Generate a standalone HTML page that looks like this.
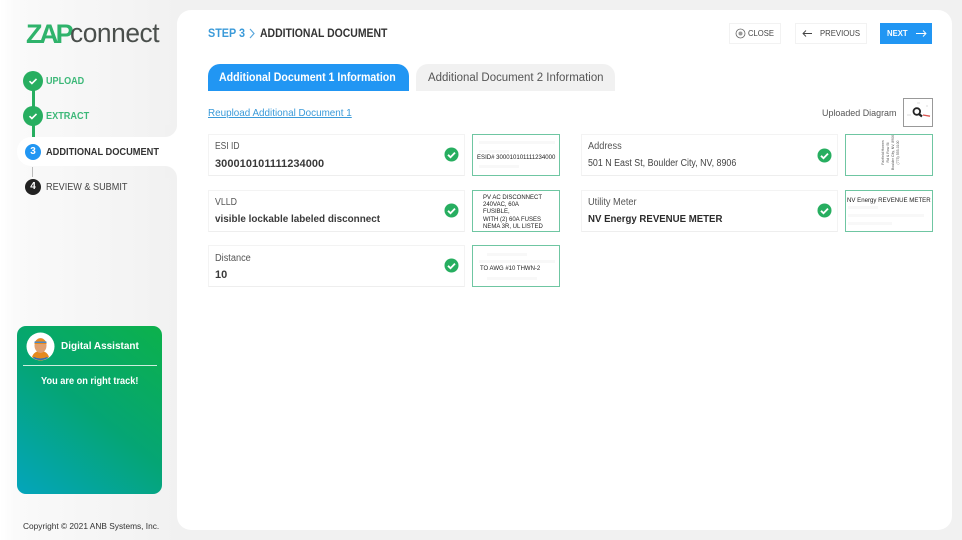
<!DOCTYPE html>
<html><head><meta charset="utf-8"><style>
*{box-sizing:border-box;margin:0;padding:0}
html,body{width:962px;height:540px;overflow:hidden}
body{position:relative;background:#f1f1f1;font-family:"Liberation Sans",sans-serif;color:#333}
.a{position:absolute;white-space:nowrap;transform-origin:0 0}
.card{position:absolute;background:#fff;border:1px solid #f3f3f3;border-bottom-color:#eee}
.lbl{position:absolute;font-size:10px;color:#555;white-space:nowrap;transform-origin:0 0}
.val{position:absolute;font-size:11px;color:#3a3a3a;font-weight:bold;white-space:nowrap;transform-origin:0 0}
.thumb{position:absolute;width:88px;height:42px;background:#fff;border:1px solid #6fc6a2;overflow:hidden}
.thumb span{position:absolute;white-space:nowrap;font-size:6px;color:#222;line-height:8px}
.ghost{position:absolute;height:3px;background:#f8f8f8}
.ck{position:absolute;width:15px;height:15px}
</style></head><body>
<div class="a" style="left:0;top:0;width:177px;height:540px;background:linear-gradient(90deg,#fff 0,#fafafa 15px,#f1f1f1 100%)"></div>
<div class="a" style="left:177px;top:10px;width:775px;height:520px;background:#fff;border-radius:14px"></div>
<div class="a" style="left:17px;top:137px;width:165px;height:29px;background:#fff;border-radius:14px 0 0 14px"></div>
<div class="a" style="left:165px;top:125px;width:12px;height:12px;background:#fff"></div>
<div class="a" style="left:165px;top:125px;width:12px;height:12px;background:#f1f1f1;border-radius:0 0 12px 0"></div>
<div class="a" style="left:165px;top:166px;width:12px;height:12px;background:#fff"></div>
<div class="a" style="left:165px;top:166px;width:12px;height:12px;background:#f1f1f1;border-radius:0 12px 0 0"></div>

<div class="a" style="left:26px;top:19px;font-size:27px;line-height:30px;font-weight:bold;color:#2fb36b;letter-spacing:-3.200px">ZAP</div>
<div class="a" style="left:70px;top:18px;font-size:27px;line-height:30px;color:#4a4f4c;letter-spacing:-.45px;transform:scaleX(.975)">connect</div>

<div class="a" style="left:32px;top:90px;width:3px;height:47px;background:#27ae60"></div>
<div class="a" style="left:32px;top:167px;width:1px;height:10px;background:#bbb"></div>
<svg class="a" style="left:23px;top:71px" width="20" height="20"><circle cx="10" cy="10" r="10" fill="#27ae60"/><path d="M6.500 10.200l2.400 2.300 4.600-4.600" fill="none" stroke="#fff" stroke-width="1.600"/></svg>
<svg class="a" style="left:23px;top:106px" width="20" height="20"><circle cx="10" cy="10" r="10" fill="#27ae60"/><path d="M6.500 10.200l2.400 2.300 4.600-4.600" fill="none" stroke="#fff" stroke-width="1.600"/></svg>
<div class="a" style="left:25px;top:144px;width:16px;height:16px;border-radius:50%;background:#2196f3;color:#fff;font-size:10px;font-weight:bold;text-align:center;line-height:16px">3</div>
<div class="a" style="left:25px;top:179px;width:16px;height:16px;border-radius:50%;background:#222;color:#fff;font-size:10px;font-weight:bold;text-align:center;line-height:16px">4</div>
<div class="a" style="left:46px;top:76px;font-size:10px;line-height:12px;font-weight:bold;color:#3cb878;transform:scaleX(.905)">UPLOAD</div>
<div class="a" style="left:46px;top:111px;font-size:10px;line-height:12px;font-weight:bold;color:#3cb878;transform:scaleX(.915)">EXTRACT</div>
<div class="a" style="left:46px;top:147px;font-size:10px;line-height:12px;font-weight:bold;color:#333;transform:scaleX(.926)">ADDITIONAL DOCUMENT</div>
<div class="a" style="left:46px;top:182px;font-size:10px;line-height:12px;color:#444;transform:scaleX(.91)">REVIEW &amp; SUBMIT</div>

<div class="a" style="left:17px;top:326px;width:145px;height:168px;border-radius:9px;background:linear-gradient(218deg,#0cb14b 0%,#05a574 50%,#04a5bc 100%)"></div>
<svg class="a" style="left:26px;top:332px" width="29" height="29" viewBox="0 0 29 29"><circle cx="14.500" cy="14.500" r="14" fill="#fff"/><path d="M6 25q2-6 8.500-6t8.500 6q-4 3.500-8.500 3.500T6 25z" fill="#e58a1f"/><path d="M8 25q6.500 3 13 0l1 1q-7.500 4-15 0z" fill="#2d72b8"/><ellipse cx="14.500" cy="13.500" rx="6" ry="7.500" fill="#e0a070"/><path d="M8.500 10q6-7 12 0v2h-12z" fill="#e88a1e"/><path d="M8.500 9.500h12v1.500h-12z" fill="#4a86c5"/></svg>
<div class="a" style="left:61px;top:340px;font-size:10.500px;line-height:13px;font-weight:bold;color:#fff;transform:scaleX(.95)">Digital Assistant</div>
<div class="a" style="left:23px;top:365px;width:134px;height:1px;background:#cdeedd"></div>
<div class="a" style="left:41px;top:375px;font-size:10px;line-height:13px;font-weight:bold;color:#fff;transform:scaleX(.92)">You are on right track!</div>
<div class="a" style="left:23px;top:521px;font-size:8.500px;line-height:11px;color:#333;transform:scaleX(.98)">Copyright © 2021 ANB Systems, Inc.</div>

<div class="a" style="left:208px;top:26px;font-size:12px;line-height:14px;font-weight:bold;color:#3a9ad9;transform:scaleX(.9)">STEP 3</div>
<svg class="a" style="left:248px;top:28px" width="8" height="11"><path d="M2 1l4 4.500L2 10" fill="none" stroke="#5aa7dc" stroke-width="1.200"/></svg>
<div class="a" style="left:260px;top:26px;font-size:12px;line-height:14px;font-weight:bold;color:#333;transform:scaleX(.87)">ADDITIONAL DOCUMENT</div>

<div class="a" style="left:729px;top:23px;width:52px;height:21px;background:#fff;border:1px solid #f2f2f2"></div>
<svg class="a" style="left:735px;top:28px" width="11" height="11"><circle cx="5.500" cy="5.500" r="4.500" fill="none" stroke="#666" stroke-width=".8"/><circle cx="5.500" cy="5.500" r="2" fill="#999"/></svg>
<div class="a" style="left:748px;top:27px;font-size:8.500px;line-height:12px;color:#444;transform:scaleX(.9)">CLOSE</div>
<div class="a" style="left:795px;top:23px;width:72px;height:21px;background:#fff;border:1px solid #f2f2f2"></div>
<svg class="a" style="left:802px;top:29px" width="10" height="9"><path d="M10 4.500H1M4 1.500L1 4.500l3 3" fill="none" stroke="#444" stroke-width=".9"/></svg>
<div class="a" style="left:820px;top:27px;font-size:8.500px;line-height:12px;color:#444;transform:scaleX(.91)">PREVIOUS</div>
<div class="a" style="left:880px;top:23px;width:52px;height:21px;background:#2196f3"></div>
<div class="a" style="left:887px;top:27px;font-size:8.500px;line-height:12px;font-weight:bold;color:#fff;transform:scaleX(.91)">NEXT</div>
<svg class="a" style="left:916px;top:29px" width="11" height="9"><path d="M0 4.500h10M7 1.500l3 3-3 3" fill="none" stroke="#fff" stroke-width=".9"/></svg>

<div class="a" style="left:208px;top:64px;width:201px;height:27px;background:#2196f3;border-radius:12px 12px 0 0"></div>
<div class="a" style="left:219px;top:71px;font-size:11.500px;line-height:14px;font-weight:bold;color:#fff;transform:scaleX(.922)">Additional Document 1 Information</div>
<div class="a" style="left:416px;top:64px;width:199px;height:27px;background:#f1f1f1;border-radius:12px 12px 0 0"></div>
<div class="a" style="left:428px;top:71px;font-size:11.500px;line-height:14px;color:#555;transform:scaleX(.995)">Additional Document 2 Information</div>

<div class="a" style="left:208px;top:107px;font-size:10.500px;line-height:13px;color:#3a9ad9;text-decoration:underline;transform:scaleX(.94)">Reupload Additional Document 1</div>
<div class="a" style="left:822px;top:107px;font-size:9.500px;line-height:13px;color:#555;transform:scaleX(.94)">Uploaded Diagram</div>
<div class="a" style="left:903px;top:98px;width:30px;height:29px;background:#fff;border:1px solid #999"></div>
<svg class="a" style="left:904px;top:99px" width="28" height="27"><circle cx="12.800" cy="12.500" r="3.300" fill="none" stroke="#222" stroke-width="1.800"/><path d="M15 15l3 2.500" stroke="#222" stroke-width="2.200"/><path d="M19 16l7 1.200" stroke="#d9534f" stroke-width="1.300"/><path d="M3 16h4M13 4h3M22 7h2" stroke="#ddd"/></svg>

<div class="card" style="left:208px;top:134px;width:257px;height:42px"></div>
<div class="lbl" style="left:215px;top:140px;line-height:13px;transform:scaleX(.85)">ESI ID</div>
<div class="val" style="left:215px;top:157px;line-height:14px;font-size:11px;letter-spacing:.05px">300010101111234000</div>
<div class="card" style="left:208px;top:190px;width:257px;height:42px"></div>
<div class="lbl" style="left:215px;top:196px;line-height:13px;transform:scaleX(.88)">VLLD</div>
<div class="val" style="left:215px;top:212px;line-height:14px;font-size:10.500px;transform:scaleX(.943)">visible lockable labeled disconnect</div>
<div class="card" style="left:208px;top:245px;width:257px;height:42px"></div>
<div class="lbl" style="left:215px;top:252px;line-height:13px;transform:scaleX(.92)">Distance</div>
<div class="val" style="left:215px;top:268px;line-height:14px">10</div>
<div class="card" style="left:581px;top:134px;width:257px;height:42px"></div>
<div class="lbl" style="left:588px;top:140px;line-height:13px;transform:scaleX(.92)">Address</div>
<div class="a" style="left:588px;top:157px;font-size:10px;line-height:14px;color:#444;transform:scaleX(.886)">501 N East St, Boulder City, NV, 8906</div>
<div class="card" style="left:581px;top:190px;width:257px;height:42px"></div>
<div class="lbl" style="left:588px;top:196px;line-height:13px;transform:scaleX(.92)">Utility Meter</div>
<div class="val" style="left:588px;top:212px;line-height:14px;font-size:10.500px;color:#2b2b2b;transform:scaleX(.918)">NV Energy REVENUE METER</div>

<svg class="ck" style="left:444px;top:147px" viewBox="0 0 15 15"><circle cx="7.500" cy="7.500" r="7" fill="#27ae60"/><path d="M4 7.800l2.500 2.400 4.500-4.600" fill="none" stroke="#fff" stroke-width="1.800"/></svg>
<svg class="ck" style="left:444px;top:203px" viewBox="0 0 15 15"><circle cx="7.500" cy="7.500" r="7" fill="#27ae60"/><path d="M4 7.800l2.500 2.400 4.500-4.600" fill="none" stroke="#fff" stroke-width="1.800"/></svg>
<svg class="ck" style="left:444px;top:258px" viewBox="0 0 15 15"><circle cx="7.500" cy="7.500" r="7" fill="#27ae60"/><path d="M4 7.800l2.500 2.400 4.500-4.600" fill="none" stroke="#fff" stroke-width="1.800"/></svg>
<svg class="ck" style="left:817px;top:148px" viewBox="0 0 15 15"><circle cx="7.500" cy="7.500" r="7" fill="#27ae60"/><path d="M4 7.800l2.500 2.400 4.500-4.600" fill="none" stroke="#fff" stroke-width="1.800"/></svg>
<svg class="ck" style="left:817px;top:203px" viewBox="0 0 15 15"><circle cx="7.500" cy="7.500" r="7" fill="#27ae60"/><path d="M4 7.800l2.500 2.400 4.500-4.600" fill="none" stroke="#fff" stroke-width="1.800"/></svg>

<div class="thumb" style="left:472px;top:134px"><div class="ghost" style="left:6px;top:6px;width:76px"></div><div class="ghost" style="left:6px;top:15px;width:30px"></div><div class="ghost" style="left:6px;top:30px;width:40px"></div><span style="left:4px;top:19px;font-size:6.050px">ESID# 300010101111234000</span></div>
<div class="thumb" style="left:472px;top:190px"><span style="left:10px;top:4px;font-size:6px;line-height:7.200px">PV AC DISCONNECT<br>240VAC, 60A<br>FUSIBLE,<br>WITH (2) 60A FUSES<br>NEMA 3R, UL LISTED</span></div>
<div class="thumb" style="left:472px;top:245px"><div class="ghost" style="left:14px;top:7px;width:40px"></div><div class="ghost" style="left:6px;top:14px;width:76px"></div><div class="ghost" style="left:14px;top:31px;width:50px"></div><span style="left:7px;top:19px;font-size:6px">TO AWG #10 THWN-2</span></div>
<div class="thumb" style="left:845px;top:134px"><span style="left:35px;top:35px;font-size:3.500px;line-height:5px;text-align:center;transform:rotate(-90deg);transform-origin:0 0;color:#555">Fairfield Homes<br>Rd &amp; Row St<br>Boulder City, NV, 8906<br>(775) 555-0100</span></div>
<div class="thumb" style="left:845px;top:190px"><div class="ghost" style="left:2px;top:15px;width:30px"></div><div class="ghost" style="left:2px;top:23px;width:76px"></div><div class="ghost" style="left:2px;top:31px;width:44px"></div><span style="left:1px;top:6px;font-size:6.100px">NV Energy REVENUE METER</span></div>
</body></html>
